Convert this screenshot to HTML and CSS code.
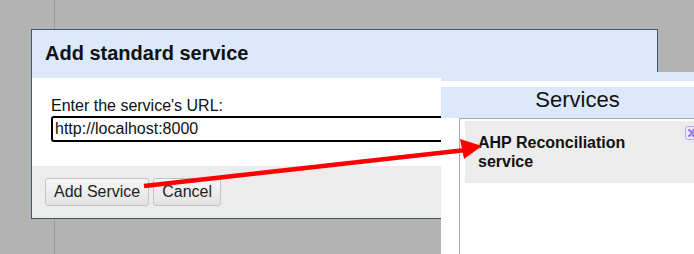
FILE: index.html
```html
<!DOCTYPE html>
<html>
<head>
<meta charset="utf-8">
<link rel="stylesheet" href="styles.css">
</head>
<body>
<div class="page"></div>
<div class="dialog">
  <div class="dialog-header">Add standard service</div>
  <div class="dialog-body">
    <label class="field-label" for="url">Enter the service's URL:</label>
    <input id="url" class="url-input" type="text" value="http://localhost:8000">
  </div>
  <div class="dialog-footer">
    <button class="btn">Add Service</button>
    <button class="btn">Cancel</button>
  </div>
</div>
<div class="services">
  <div class="services-topband"></div>
  <div class="services-header">Services</div>
  <div class="services-list">
    <div class="service-item">
      <span class="service-name">AHP Reconciliation service</span>
      <svg class="service-remove" width="14" height="14" viewBox="0 0 14 14">
        <rect x="0.5" y="0.5" width="13" height="13" rx="2" fill="#ece8ff" stroke="#b4a6f2"/>
        <path d="M3.5 3.5 L7.5 7 L3.5 10.5 M7.5 3.5 L11 7 L7.5 10.5" stroke="#8b74e6" stroke-width="2" fill="none"/>
      </svg>
    </div>
  </div>
</div>
<svg class="arrow" width="694" height="254" viewBox="0 0 694 254">
  <line x1="144" y1="186" x2="466" y2="150" stroke="#ff0000" stroke-width="4.5"/>
  <polygon points="460,139 482,146 464,159" fill="#ff0000"/>
</svg>
</body>
</html>
```
FILE: styles.css
```css
html, body {
  margin: 0;
  padding: 0;
}
body {
  width: 694px;
  height: 254px;
  overflow: hidden;
  position: relative;
  background: #b3b3b3;
  font-family: "Liberation Sans", Arial, sans-serif;
  color: #111;
}
.page {
  height: 254px;
  width: 55px;
  border-right: 1px solid #9a9a9a;
  box-sizing: border-box;
}
.dialog {
  position: absolute;
  left: 31px;
  top: 29px;
  width: 625px;
  height: 188px;
  border: 1px solid #3e5673;
  display: flex;
  flex-direction: column;
  background: #fff;
}
.dialog-header {
  height: 48px;
  box-sizing: border-box;
  padding: 12px 13px 0;
  background: #dce8fc;
  font-size: 20px;
  font-weight: bold;
  line-height: 23px;
}
.dialog-body {
  height: 88px;
  box-sizing: border-box;
  padding: 19px 19px 0;
  display: flex;
  flex-direction: column;
  gap: 1px;
}
.field-label {
  font-size: 16px;
  line-height: 18px;
}
.url-input {
  width: 589px;
  height: 26px;
  box-sizing: border-box;
  margin: 0;
  border: 2px solid #000;
  border-radius: 3px;
  padding: 0 2px;
  font-family: "Liberation Sans", Arial, sans-serif;
  font-size: 16px;
  color: #111;
  outline: none;
}
.dialog-footer {
  flex: 1;
  background: #ececec;
  padding: 12px 13px 0;
  display: flex;
  align-items: flex-start;
  gap: 4px;
}
.btn {
  height: 28px;
  margin: 0;
  padding: 0 8px;
  border: 1px solid #c3c3c3;
  border-radius: 3px;
  background: linear-gradient(#f7f7f7, #e3e3e3);
  font-family: "Liberation Sans", Arial, sans-serif;
  font-size: 16px;
  color: #222;
}
.services {
  position: absolute;
  left: 441px;
  top: 72px;
  width: 253px;
  height: 182px;
  background: #fff;
  display: flex;
  flex-direction: column;
}
.services-topband {
  height: 9px;
  margin-bottom: 6px;
  background: #dce8fc;
}
.services-header {
  height: 31px;
  margin-right: -20px;
  background: #dce8fc;
  text-align: center;
  font-size: 22px;
  line-height: 25px;
  color: #111;
}
.services-list {
  flex: 1;
  margin-left: 18px;
  border-left: 1px solid #a9a9a9;
  border-top: 1px solid #a9a9a9;
  padding: 2px 0 0 5px;
}
.service-item {
  position: relative;
  height: 62px;
  box-sizing: border-box;
  padding: 12px 13px;
  background: #ececec;
  font-size: 16px;
  font-weight: bold;
  line-height: 19px;
}
.service-name {
  display: block;
  width: 180px;
}
.service-remove {
  position: absolute;
  left: 220px;
  top: 5px;
}
.arrow {
  position: absolute;
  left: 0;
  top: 0;
  pointer-events: none;
}
```
